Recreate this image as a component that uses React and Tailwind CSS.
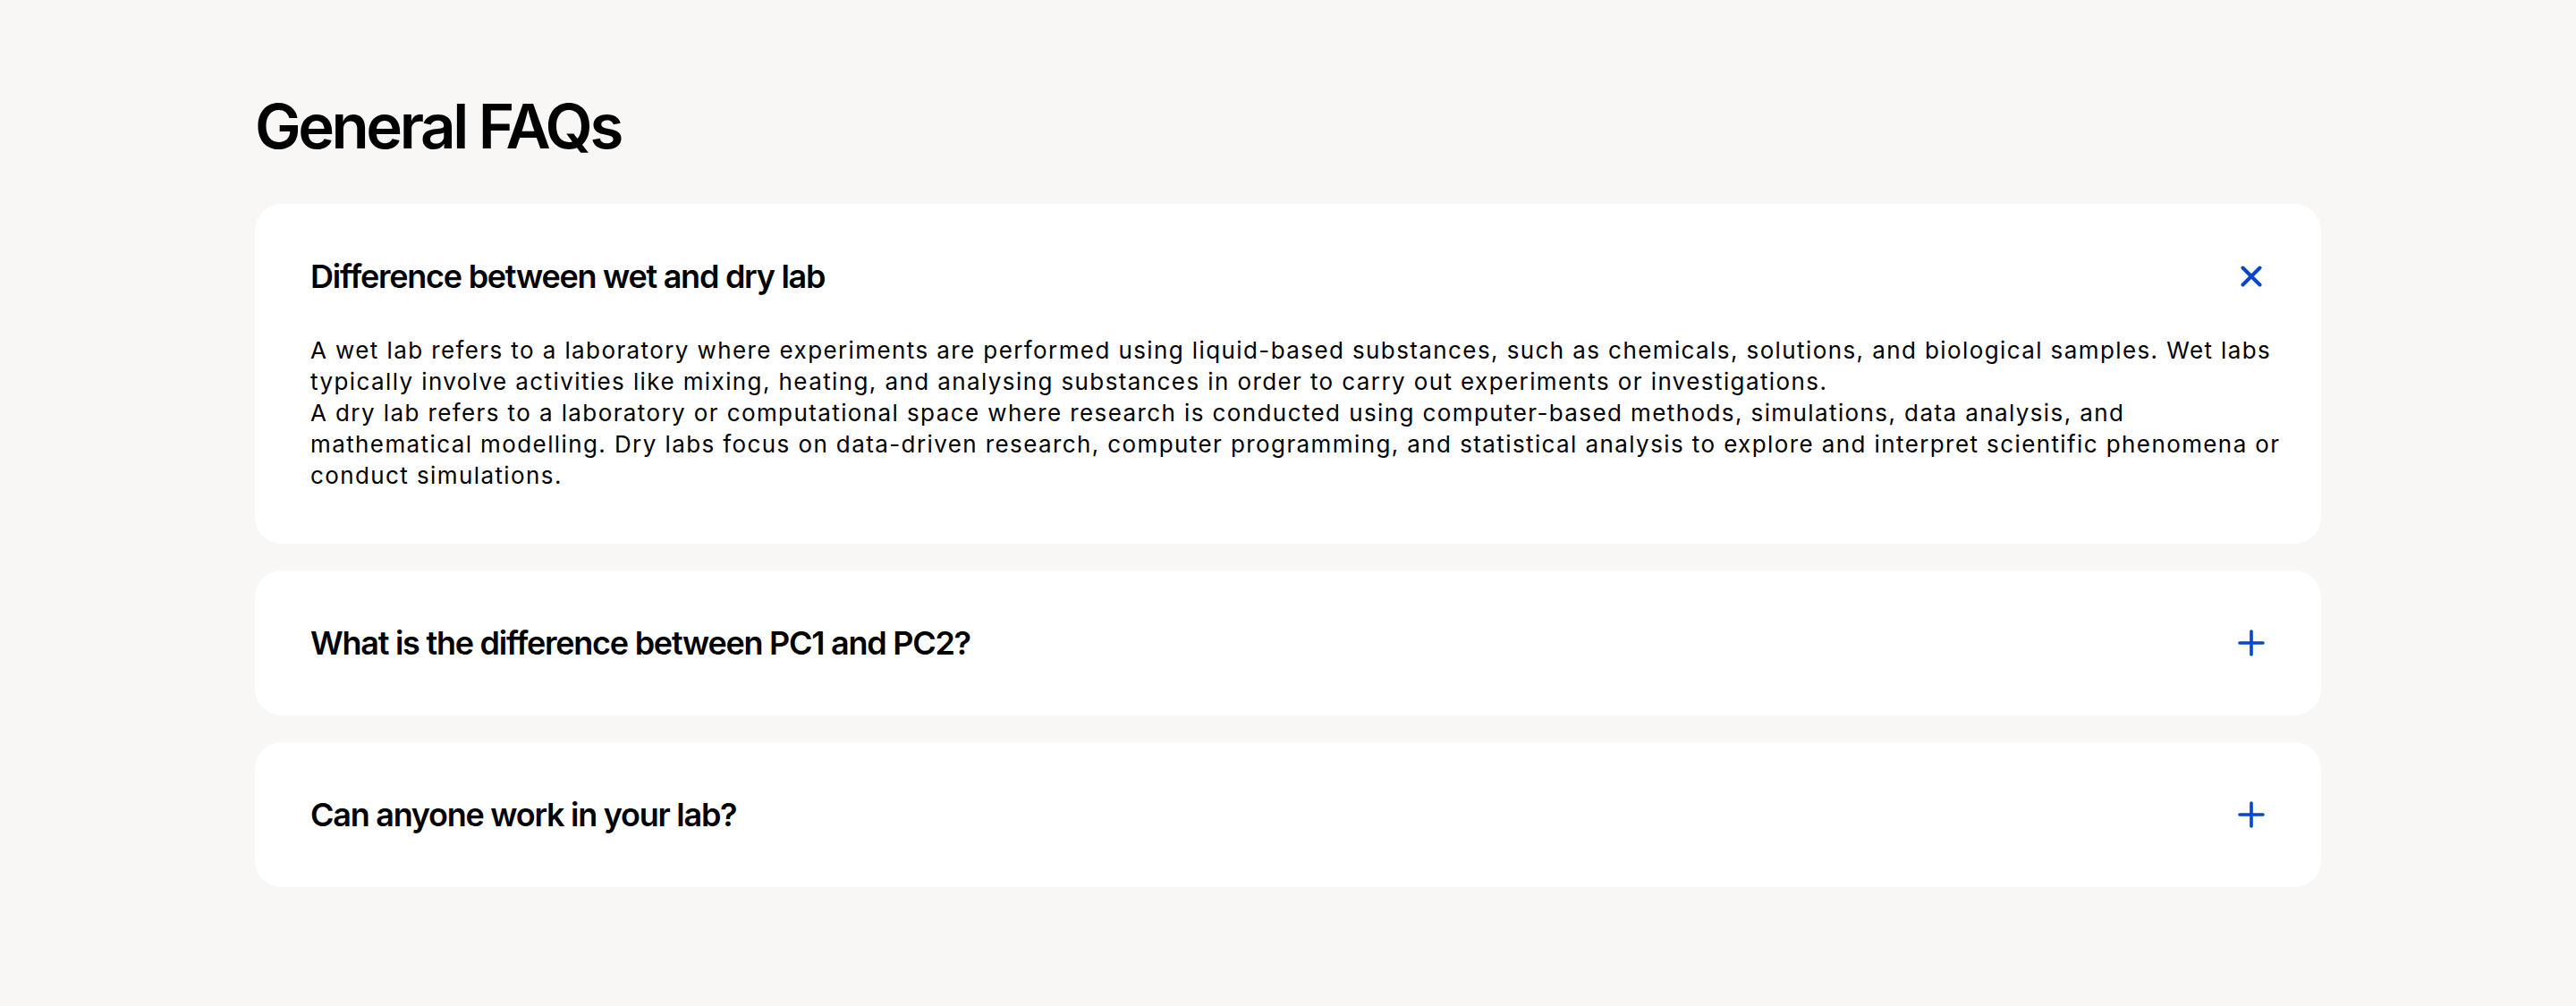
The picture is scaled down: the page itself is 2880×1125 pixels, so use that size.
import React, { useState } from "react";

// Each answer is a list of paragraphs; each paragraph is a list of lines.
const faqs = [
  {
    q: "Difference between wet and dry lab",
    a: [
      [
        "A wet lab refers to a laboratory where experiments are performed using liquid-based substances, such as chemicals, solutions, and biological samples. Wet labs",
        "typically involve activities like mixing, heating, and analysing substances in order to carry out experiments or investigations.",
      ],
      [
        "A dry lab refers to a laboratory or computational space where research is conducted using computer-based methods, simulations, data analysis, and",
        "mathematical modelling. Dry labs focus on data-driven research, computer programming, and statistical analysis to explore and interpret scientific phenomena or",
        "conduct simulations.",
      ],
    ],
  },
  {
    q: "What is the difference between PC1 and PC2?",
    a: [
      [
        "PC1 and PC2 are physical containment levels. PC1 labs handle low-risk materials, while PC2 labs are equipped for work with organisms that pose a moderate risk.",
      ],
    ],
  },
  {
    q: "Can anyone work in your lab?",
    a: [
      [
        "Our lab spaces are available to researchers and companies who meet our safety and induction requirements.",
      ],
    ],
  },
];

function CloseIcon() {
  return (
    <svg width="24" height="24" viewBox="0 0 24 24" fill="none" stroke="#0447c9" strokeWidth="4" strokeLinecap="round">
      <line x1="2.5" y1="2.5" x2="21.5" y2="21.5" />
      <line x1="21.5" y1="2.5" x2="2.5" y2="21.5" />
    </svg>
  );
}

function PlusIcon() {
  return (
    <svg width="30" height="30" viewBox="0 0 30 30" fill="none" stroke="#0447c9" strokeWidth="3.6" strokeLinecap="round">
      <line x1="15" y1="2" x2="15" y2="28" />
      <line x1="2" y1="15" x2="28" y2="15" />
    </svg>
  );
}

function FaqItem({ item, open, onToggle }) {
  return (
    <div className="bg-white rounded-[30px] px-[62px] py-[59px]">
      <button
        type="button"
        onClick={onToggle}
        className="w-full h-[44px] flex items-center justify-between text-left cursor-pointer"
      >
        <span className="text-[36px] leading-[44px] font-semibold tracking-[-0.035em] text-black">
          {item.q}
        </span>
        <span className="w-8 h-8 flex items-center justify-center">
          {open ? <CloseIcon /> : <PlusIcon />}
        </span>
      </button>
      {open && (
        <div className="mt-[43px] -mr-[60px] text-[26px] leading-[35px] text-black tracking-[1.4px]">
          {item.a.map((lines, i) => (
            <p key={i}>
              {lines.map((line, j) => (
                <React.Fragment key={j}>
                  {j > 0 && <br />}
                  {line}
                </React.Fragment>
              ))}
            </p>
          ))}
        </div>
      )}
    </div>
  );
}

export default function App() {
  const [openIndex, setOpenIndex] = useState(0);
  return (
    <div
      className="min-h-[1125px] bg-[#f8f7f5] pt-[107px] pb-[120px]"
      style={{ fontFamily: "Inter, 'Noto Sans', sans-serif" }}
    >
      <div className="max-w-[2310px] mx-auto">
        <h1 className="text-[69px] leading-[69px] font-semibold tracking-[-0.05em] text-black mb-[52px]">
          General FAQs
        </h1>
        <div className="flex flex-col gap-[30px]">
          {faqs.map((item, i) => (
            <FaqItem
              key={item.q}
              item={item}
              open={openIndex === i}
              onToggle={() => setOpenIndex(openIndex === i ? -1 : i)}
            />
          ))}
        </div>
      </div>
    </div>
  );
}
